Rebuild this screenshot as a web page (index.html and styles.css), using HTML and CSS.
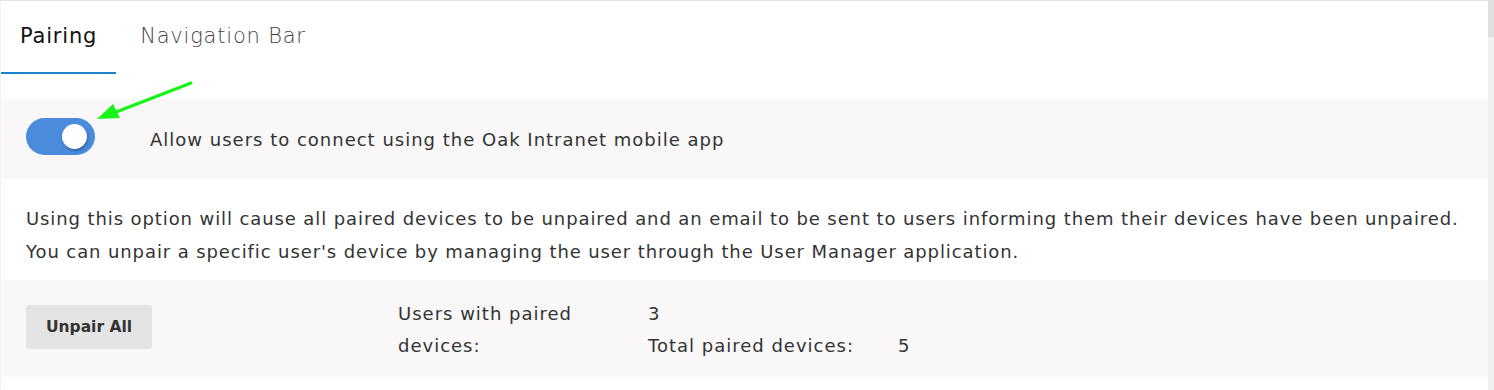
FILE: index.html
```html
<!DOCTYPE html>
<html lang="en">
<head>
    <meta charset="UTF-8">
    <title>Mobile app settings</title>
    <link rel="stylesheet" href="styles.css">
</head>
<body>
<div class="page">
    <div class="card">
        <ul class="tabs">
            <li class="tab current">Pairing</li>
            <li class="tab">Navigation Bar</li>
        </ul>

        <div class="row switch-row">
            <span class="switch"><span class="knob"></span></span>
            <span class="switch-label">Allow users to connect using the Oak Intranet mobile app</span>
        </div>

        <div class="note">
            <p>Using this option will cause all paired devices to be unpaired and an email to be sent to users informing them their devices have been unpaired.</p>
            <p>You can unpair a specific user's device by managing the user through the User Manager application.</p>
        </div>

        <div class="row actions">
            <button class="btn">Unpair All</button>
            <div class="stats">
                <span class="stat-users">Users with paired devices:</span>
                <span class="stat-users-val">3</span>
                <span class="stat-total">Total paired devices:</span>
                <span class="stat-total-val">5</span>
            </div>
        </div>

        <svg class="pointer" width="120" height="50" viewBox="0 0 120 50">
            <line x1="98" y1="5" x2="18" y2="36" stroke="#16f516" stroke-width="3" stroke-linecap="round"/>
            <polygon points="4,41 20,26 27,40" fill="#16f516"/>
        </svg>
    </div>
    <div class="scrollbar"><div class="thumb"></div></div>
</div>
</body>
</html>
```

FILE: styles.css
```css
* {
    margin: 0;
    padding: 0;
}
body {
    font-family: "DejaVu Sans", "Open Sans", sans-serif;
    color: #333;
    background: #fff;
}
.page {
    display: flex;
    height: 390px;
}
.card {
    flex: 1;
    position: relative;
    border-top: 1px solid #e4e4e4;
    border-left: 1px solid #f2f2f2;
    background: #fff;
}
.scrollbar {
    width: 6px;
    background: #f0f0f0;
}
.scrollbar .thumb {
    height: 37px;
    background: #e0e0e0;
}

.tabs {
    display: flex;
    list-style: none;
    height: 73px;
    margin-bottom: 25px;
}
.tab {
    padding: 0 19px;
    font-size: 21px;
    font-weight: 300;
    line-height: 70px;
    letter-spacing: 0.8px;
    color: #444;
}
.tab + .tab {
    margin-left: 5px;
}
.tab.current {
    color: #111;
    font-weight: 400;
    border-bottom: 2px solid #1b82c9;
}

.row {
    background: #f9f7f8;
    display: flex;
    align-items: center;
    padding: 0 25px;
}
.switch-row {
    height: 80px;
}
.switch {
    width: 69px;
    height: 37px;
    border-radius: 19px;
    background: #4a8cdb;
    display: flex;
    align-items: center;
    justify-content: flex-end;
    padding-right: 8px;
    box-sizing: border-box;
    margin-top: -5px;
}
.knob {
    width: 25px;
    height: 25px;
    border-radius: 50%;
    background: #fff;
    box-shadow: 1px 2px 3px rgba(0, 0, 0, 0.3);
}
.switch-label {
    margin-left: 55px;
    font-size: 18px;
    letter-spacing: 1px;
}

.note {
    padding: 23px 10px 12px 25px;
    font-size: 18px;
    line-height: 33px;
    letter-spacing: 0.9px;
}

.actions {
    height: 97px;
    align-items: flex-start;
    padding-top: 25px;
    box-sizing: border-box;
}
.btn {
    width: 126px;
    height: 44px;
    border: none;
    border-radius: 3px;
    background: #e4e4e4;
    font-family: inherit;
    font-size: 15.5px;
    font-weight: 700;
    color: #333;
}
.stats {
    display: grid;
    grid-template-columns: 250px 250px auto;
    margin-left: 246px;
    margin-top: -7px;
    font-size: 18px;
    line-height: 32px;
    letter-spacing: 1px;
}
.stat-users {
    grid-column: 1;
    grid-row: 1 / 3;
    width: 185px;
}
.stat-users-val {
    grid-column: 2;
    grid-row: 1;
}
.stat-total {
    grid-column: 2;
    grid-row: 2;
}
.stat-total-val {
    grid-column: 3;
    grid-row: 2;
}

.pointer {
    position: absolute;
    left: 92px;
    top: 77px;
}
```
